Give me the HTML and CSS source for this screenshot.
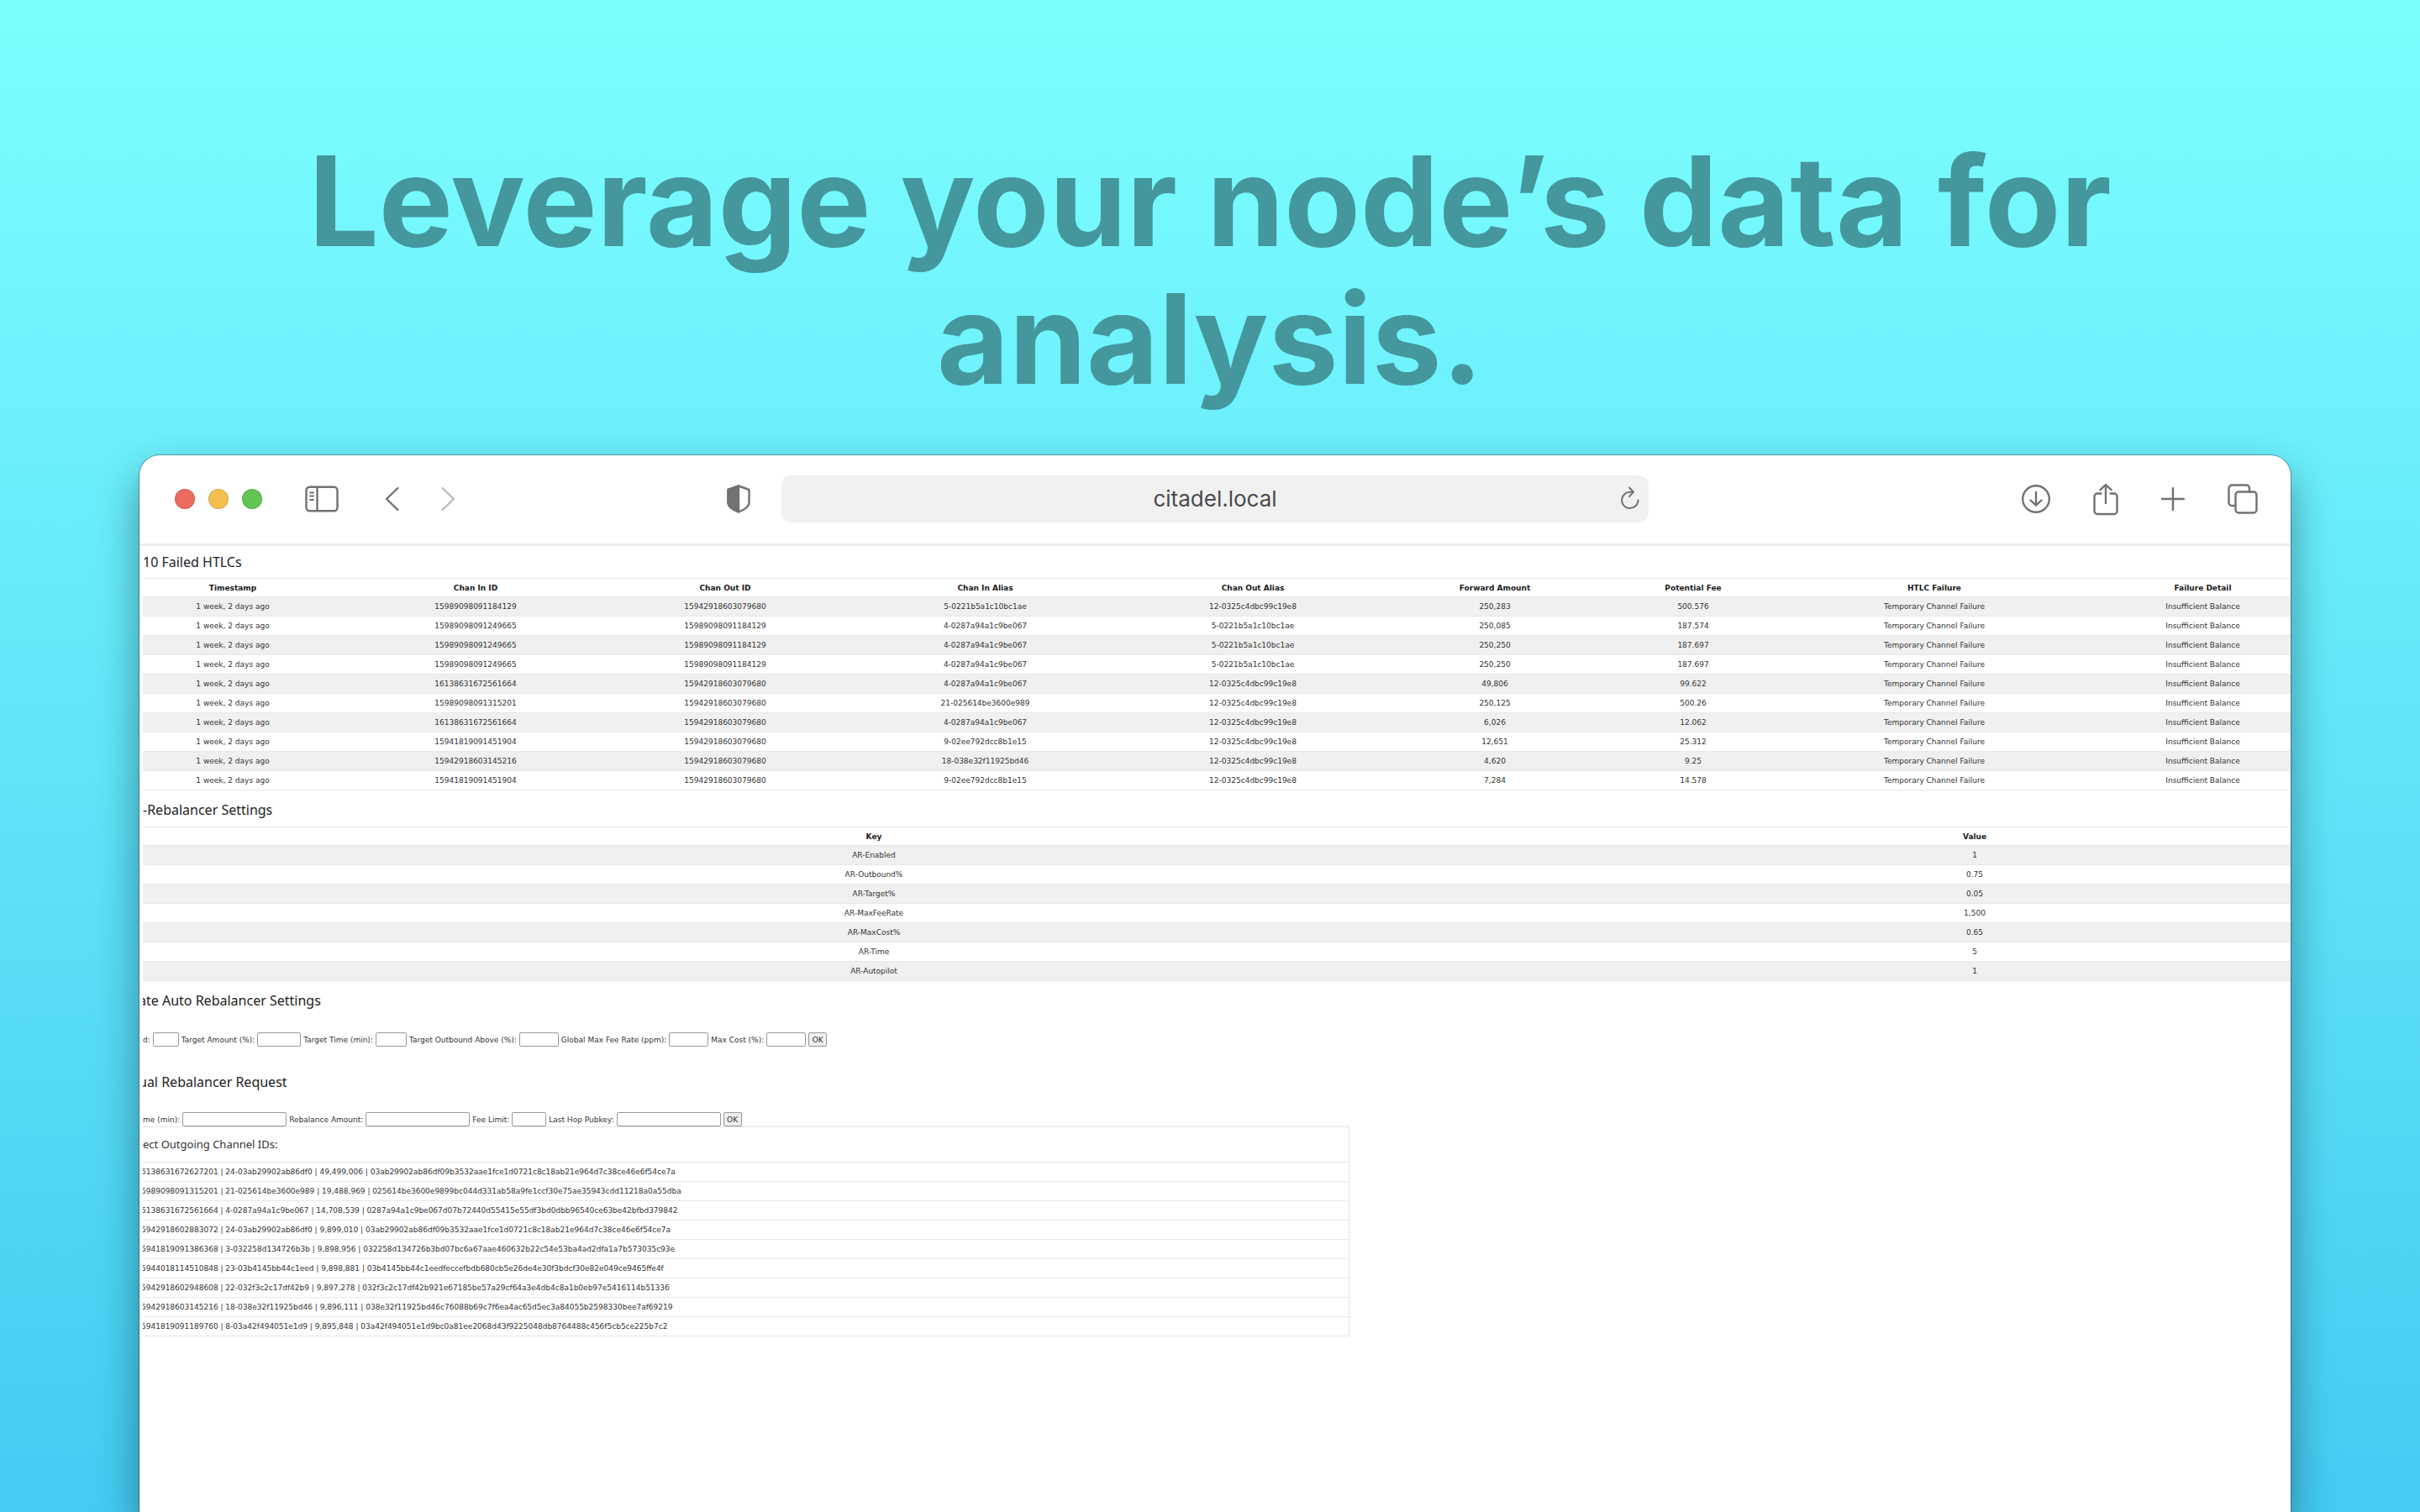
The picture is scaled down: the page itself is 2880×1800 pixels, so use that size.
FILE: index.html
```html
<!DOCTYPE html>
<html lang="en">
<head>
<meta charset="utf-8">
<title>citadel.local</title>
<link rel="stylesheet" href="styles.css">
</head>
<body>
<h1 class="headline">Leverage your node’s data for analysis.</h1>
<main class="window">
  <header class="toolbar">
    <div class="tools tools-left">
      <div class="lights"><span class="light red"></span><span class="light yellow"></span><span class="light green"></span></div>
      <button class="icon sidebar" aria-label="Sidebar"><svg width="40" height="32" viewBox="0 0 40 32"><rect x="1.5" y="1.8" width="37" height="28.4" rx="4"/><path d="M14.5 2v28"/><path class="thin" d="M6 8.500h4M6 12.500h4M6 17h4"/></svg></button>
      <button class="icon back" aria-label="Back"><svg width="18" height="32" viewBox="0 0 18 32"><path d="M15.500 3L2 16l13.500 13"/></svg></button>
      <button class="icon forward" aria-label="Forward"><svg width="18" height="32" viewBox="0 0 18 32"><path d="M2.500 3L16 16 2.500 29"/></svg></button>
      <button class="icon shield" aria-label="Privacy report"><svg width="28" height="34" viewBox="0 0 28 34"><path d="M14 1.500L26.500 6v15.500c0 4-5 8-12.500 11-7.500-3-12.500-7-12.500-11V6z"/><path class="solid" d="M14 1.500L1.500 6v15.500c0 4 5 8 12.500 11z"/></svg></button>
    </div>
    <div class="address">
      <input class="url" type="text" value="citadel.local" aria-label="Address">
      <button class="icon reload" aria-label="Reload"><svg width="24" height="28" viewBox="0 0 24 28"><path class="thin" d="M21.500 16.500A9.700 9.700 0 1 1 12 6.700h3.500"/><path class="thin" d="M11 1.500l5 5.200-5 5.500"/></svg></button>
    </div>
    <div class="tools tools-right">
      <button class="icon" aria-label="Downloads"><svg width="34" height="36" viewBox="0 0 34 36"><circle cx="17" cy="18" r="15.800"/><path d="M17 10v15.500M10.500 19.500l6.500 6.200 6.500-6.200"/></svg></button>
      <button class="icon" aria-label="Share"><svg width="30" height="40" viewBox="0 0 30 40"><path d="M9.500 13.500H5a3.500 3.500 0 0 0-3.500 3.500v17.500A3.500 3.500 0 0 0 5 38h20a3.500 3.500 0 0 0 3.500-3.500V17a3.500 3.500 0 0 0-3.500-3.500h-4.500M15 25V3.500M8.500 9.200L15 3l6.500 6.200"/></svg></button>
      <button class="icon" aria-label="New tab"><svg width="28" height="28" viewBox="0 0 28 28"><path d="M14 1v26M1 14h26"/></svg></button>
      <button class="icon" aria-label="Tab overview"><svg width="36" height="36" viewBox="0 0 36 36"><rect x="9.500" y="9.500" width="25" height="25" rx="3.500"/><path d="M9.500 26H5a3.500 3.500 0 0 1-3.500-3.500V5A3.500 3.500 0 0 1 5 1.500h17.500A3.500 3.500 0 0 1 26 5v4.500"/></svg></button>
    </div>
  </header>
  <div class="page">
    <h2 class="title first">10 Failed HTLCs</h2>
    <table class="data">
      <colgroup><col class="c-time"><col class="c-in"><col class="c-out"><col class="c-in-alias"><col class="c-out-alias"><col class="c-amount"><col class="c-fee"><col class="c-failure"><col class="c-detail"></colgroup>
      <thead><tr><th>Timestamp</th><th>Chan In ID</th><th>Chan Out ID</th><th>Chan In Alias</th><th>Chan Out Alias</th><th>Forward Amount</th><th>Potential Fee</th><th>HTLC Failure</th><th>Failure Detail</th></tr></thead>
      <tbody>
        <tr><td>1 week, 2 days ago</td><td>15989098091184129</td><td>15942918603079680</td><td>5-0221b5a1c10bc1ae</td><td>12-0325c4dbc99c19e8</td><td>250,283</td><td>500.576</td><td>Temporary Channel Failure</td><td>Insufficient Balance</td></tr>
        <tr><td>1 week, 2 days ago</td><td>15989098091249665</td><td>15989098091184129</td><td>4-0287a94a1c9be067</td><td>5-0221b5a1c10bc1ae</td><td>250,085</td><td>187.574</td><td>Temporary Channel Failure</td><td>Insufficient Balance</td></tr>
        <tr><td>1 week, 2 days ago</td><td>15989098091249665</td><td>15989098091184129</td><td>4-0287a94a1c9be067</td><td>5-0221b5a1c10bc1ae</td><td>250,250</td><td>187.697</td><td>Temporary Channel Failure</td><td>Insufficient Balance</td></tr>
        <tr><td>1 week, 2 days ago</td><td>15989098091249665</td><td>15989098091184129</td><td>4-0287a94a1c9be067</td><td>5-0221b5a1c10bc1ae</td><td>250,250</td><td>187.697</td><td>Temporary Channel Failure</td><td>Insufficient Balance</td></tr>
        <tr><td>1 week, 2 days ago</td><td>16138631672561664</td><td>15942918603079680</td><td>4-0287a94a1c9be067</td><td>12-0325c4dbc99c19e8</td><td>49,806</td><td>99.622</td><td>Temporary Channel Failure</td><td>Insufficient Balance</td></tr>
        <tr><td>1 week, 2 days ago</td><td>15989098091315201</td><td>15942918603079680</td><td>21-025614be3600e989</td><td>12-0325c4dbc99c19e8</td><td>250,125</td><td>500.26</td><td>Temporary Channel Failure</td><td>Insufficient Balance</td></tr>
        <tr><td>1 week, 2 days ago</td><td>16138631672561664</td><td>15942918603079680</td><td>4-0287a94a1c9be067</td><td>12-0325c4dbc99c19e8</td><td>6,026</td><td>12.062</td><td>Temporary Channel Failure</td><td>Insufficient Balance</td></tr>
        <tr><td>1 week, 2 days ago</td><td>15941819091451904</td><td>15942918603079680</td><td>9-02ee792dcc8b1e15</td><td>12-0325c4dbc99c19e8</td><td>12,651</td><td>25.312</td><td>Temporary Channel Failure</td><td>Insufficient Balance</td></tr>
        <tr><td>1 week, 2 days ago</td><td>15942918603145216</td><td>15942918603079680</td><td>18-038e32f11925bd46</td><td>12-0325c4dbc99c19e8</td><td>4,620</td><td>9.25</td><td>Temporary Channel Failure</td><td>Insufficient Balance</td></tr>
        <tr><td>1 week, 2 days ago</td><td>15941819091451904</td><td>15942918603079680</td><td>9-02ee792dcc8b1e15</td><td>12-0325c4dbc99c19e8</td><td>7,284</td><td>14.578</td><td>Temporary Channel Failure</td><td>Insufficient Balance</td></tr>
      </tbody>
    </table>

    <h2 class="title">-Rebalancer Settings</h2>
    <table class="data settings">
      <colgroup><col class="c-key"><col class="c-value"></colgroup>
      <thead><tr><th>Key</th><th>Value</th></tr></thead>
      <tbody>
        <tr><td>AR-Enabled</td><td>1</td></tr>
        <tr><td>AR-Outbound%</td><td>0.75</td></tr>
        <tr><td>AR-Target%</td><td>0.05</td></tr>
        <tr><td>AR-MaxFeeRate</td><td>1,500</td></tr>
        <tr><td>AR-MaxCost%</td><td>0.65</td></tr>
        <tr><td>AR-Time</td><td>5</td></tr>
        <tr><td>AR-Autopilot</td><td>1</td></tr>
      </tbody>
    </table>

    <h2 class="title cut">ate Auto Rebalancer Settings</h2>
    <form class="fields">
      <label for="enabled">d:</label><input id="enabled" class="w-31" type="text">
      <label for="amount">Target Amount (%):</label><input id="amount" class="w-52" type="text">
      <label for="time">Target Time (min):</label><input id="time" class="w-37" type="text">
      <label for="outbound">Target Outbound Above (%):</label><input id="outbound" class="w-47" type="text">
      <label for="rate">Global Max Fee Rate (ppm):</label><input id="rate" class="w-47" type="text">
      <label for="cost">Max Cost (%):</label><input id="cost" class="w-47" type="text">
      <button class="ok" type="button">OK</button>
    </form>

    <h2 class="title request cut">ual Rebalancer Request</h2>
    <form class="fields">
      <label for="minutes">me (min):</label><input id="minutes" class="w-124" type="text">
      <label for="rebalance">Rebalance Amount:</label><input id="rebalance" class="w-124" type="text">
      <label for="limit">Fee Limit:</label><input id="limit" class="w-41" type="text">
      <label for="pubkey">Last Hop Pubkey:</label><input id="pubkey" class="w-124" type="text">
      <button class="ok" type="button">OK</button>
    </form>
    <section class="channels">
      <h3 class="subtitle">ect Outgoing Channel IDs:</h3>
      <ul class="list">
        <li>6138631672627201 | 24-03ab29902ab86df0 | 49,499,006 | 03ab29902ab86df09b3532aae1fce1d0721c8c18ab21e964d7c38ce46e6f54ce7a</li>
        <li>5989098091315201 | 21-025614be3600e989 | 19,488,969 | 025614be3600e9899bc044d331ab58a9fe1ccf30e75ae35943cdd11218a0a55dba</li>
        <li>6138631672561664 | 4-0287a94a1c9be067 | 14,708,539 | 0287a94a1c9be067d07b72440d55415e55df3bd0dbb96540ce63be42bfbd379842</li>
        <li>5942918602883072 | 24-03ab29902ab86df0 | 9,899,010 | 03ab29902ab86df09b3532aae1fce1d0721c8c18ab21e964d7c38ce46e6f54ce7a</li>
        <li>5941819091386368 | 3-032258d134726b3b | 9,898,956 | 032258d134726b3bd07bc6a67aae460632b22c54e53ba4ad2dfa1a7b573035c93e</li>
        <li>5944018114510848 | 23-03b4145bb44c1eed | 9,898,881 | 03b4145bb44c1eedfeccefbdb680cb5e26de4e30f3bdcf30e82e049ce9465ffe4f</li>
        <li>5942918602948608 | 22-032f3c2c17df42b9 | 9,897,278 | 032f3c2c17df42b921e67185be57a29cf64a3e4db4c8a1b0eb97e5416114b51336</li>
        <li>5942918603145216 | 18-038e32f11925bd46 | 9,896,111 | 038e32f11925bd46c76088b69c7f6ea4ac65d5ec3a84055b2598330bee7af69219</li>
        <li>5941819091189760 | 8-03a42f494051e1d9 | 9,895,848 | 03a42f494051e1d9bc0a81ee2068d43f9225048db8764488c456f5cb5ce225b7c2</li>
      </ul>
    </section>
  </div>
</main>
</body>
</html>
```
FILE: styles.css
```css
* { box-sizing: border-box; }

body {
  margin: 0;
  min-height: 100vh;
  display: flex;
  flex-direction: column;
  overflow-x: hidden;
  background: linear-gradient(#7dffff, #43cbf2);
  font-family: "DejaVu Sans", Verdana, sans-serif;
  color: #333;
}

.headline {
  margin: 0;
  padding: 158px 10% 56px;
  font: 700 148px/164px Inter, sans-serif;
  color: #44979d;
  text-align: center;
}

.window {
  flex: 1;
  display: flex;
  flex-direction: column;
  margin: 0 154px 0 166px;
  border-radius: 24px 24px 0 0;
  background: #fff;
  box-shadow: 0 0 0 1px rgba(0, 0, 0, .3), 0 24px 50px rgba(0, 0, 0, .4);
}

/* Browser toolbar */
.toolbar {
  display: grid;
  grid-template-columns: 1fr minmax(auto, 1032px) 1fr;
  align-items: center;
  height: 108px;
  padding-bottom: 2px;
  border-bottom: 3px solid #ededed;
}
.tools { display: flex; align-items: center; }
.tools-left { padding: 0 37px 0 42px; }
.tools-right { justify-content: flex-end; gap: 51px; padding-right: 39px; }
.lights { display: flex; gap: 16px; }
.light {
  width: 24px;
  height: 24px;
  border-radius: 50%;
  border: 1px solid rgba(0, 0, 0, .12);
}
.red { background: #ed6a5e; }
.yellow { background: #f5bf4f; }
.green { background: #61c554; }

.icon {
  display: flex;
  padding: 0;
  border: 0;
  background: none;
  color: #727272;
}
.icon svg {
  fill: none;
  stroke: currentColor;
  stroke-width: 2.400;
  stroke-linecap: round;
  stroke-linejoin: round;
}
.icon .thin { stroke-width: 2; }
.icon .solid { fill: currentColor; }
.sidebar { margin-left: 51px; }
.back { margin-left: 55px; }
.forward { margin-left: 48px; color: #bbb; }
.shield { margin-left: auto; }

.address { position: relative; }
.url {
  display: block;
  width: 100%;
  height: 56px;
  padding: 0 48px;
  border: 0;
  border-radius: 12px;
  background: #f1f1f1;
  font: 400 26px Inter, sans-serif;
  color: #4a4a4a;
  text-align: center;
}
.reload { position: absolute; right: 10px; top: 13px; }

/* Page content */
.page {
  margin-left: 4px;
  overflow: hidden;
}
.title {
  margin: 0;
  padding-top: 9px;
  height: 43px;
  font: 400 16px/28px "Noto Sans", sans-serif;
  color: #222;
}
.first { padding-top: 5px; height: 38px; }
.cut { text-indent: -5px; }

.data {
  width: 100%;
  table-layout: fixed;
  border-collapse: collapse;
  font-size: 9px;
  line-height: 12px;
  text-align: center;
}
.data tr { height: 23px; }
.data thead tr { height: 22px; }
.data th, .data td { padding: 0; border-top: 1px solid #e8e8e8; }
.data tr:last-child td { border-bottom: 1px solid #e8e8e8; }
.data th { color: #1a1a1a; }
.data tbody tr:nth-child(odd) { background: #f0f0f0; }
.settings { width: calc(100% + 64px); margin-left: -64px; }

.c-time { width: 214px; }
.c-in { width: 364px; }
.c-out { width: 230px; }
.c-in-alias { width: 389px; }
.c-out-alias { width: 248px; }
.c-amount { width: 328px; }
.c-fee { width: 144px; }
.c-failure { width: 430px; }
.c-detail { width: 209px; }
.c-key { width: 1868px; }
.c-value { width: 752px; }

.fields {
  display: flex;
  align-items: center;
  gap: 3px;
  margin-top: 18px;
  font-size: 9px;
  line-height: 16px;
  white-space: nowrap;
}
.fields input, .ok {
  height: 17px;
  padding: 0;
  border: 1px solid #999;
  border-radius: 2px;
  background: #fff;
  font: 9px/14px "DejaVu Sans", Verdana, sans-serif;
  color: #333;
}
.fields .ok { width: 22px; background: #efefef; }
.request { padding-top: 28px; height: 60px; }
.w-31 { width: 31px; }
.w-37 { width: 37px; }
.w-41 { width: 41px; }
.w-47 { width: 47px; }
.w-52 { width: 52px; }
.w-124 { width: 124px; }

.channels {
  width: 1436px;
  max-width: 100%;
  border: 1px solid #e4e4e4;
  border-left: 0;
}
.subtitle {
  margin: 0;
  font: 400 13px/41px "Noto Sans", sans-serif;
}
.list {
  margin: 0;
  padding: 0;
  list-style: none;
  font-size: 9px;
  line-height: 22px;
  text-indent: -2px;
}
.list li { border-top: 1px solid #e8e8e8; }
```
